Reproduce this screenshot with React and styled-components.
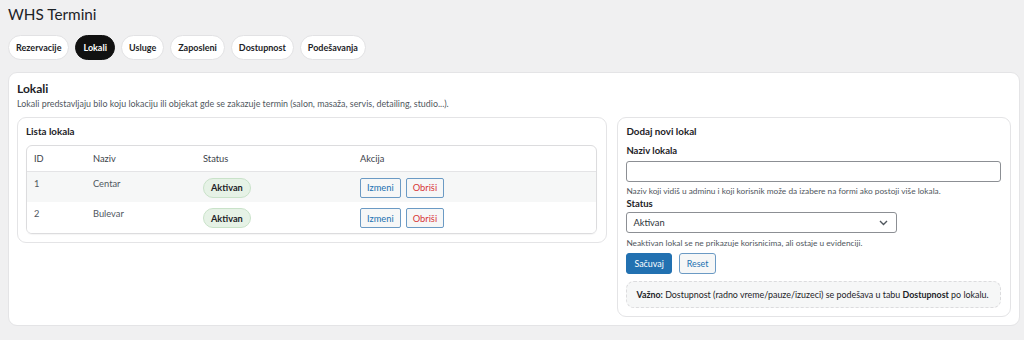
import React from "react";
import styled, { createGlobalStyle } from "styled-components";

const Global = createGlobalStyle`
  html, body { margin: 0; padding: 0; background: #f0f0f1; }
  body { font-family: Lato, "Open Sans", sans-serif; color: #1d2327; }
  * { box-sizing: border-box; }
`;

const Page = styled.div`
  padding: 0 4px 13px 8px;
`;

const Title = styled.h1`
  margin: 0;
  padding-top: 4px;
  height: 30px;
  font-size: 15.3px;
  font-weight: 400;
  line-height: 20px;
  color: #1d2327;
`;

const Tabs = styled.nav`
  display: flex;
  gap: 6px;
  margin-top: 5px;
  margin-bottom: 12px;
`;

const Tab = styled.button`
  height: 25px;
  padding: 0 7px;
  border-radius: 13px;
  border: 1px solid ${(p) => (p.$active ? "#111" : "#e2e2e4")};
  background: ${(p) => (p.$active ? "#111" : "#fff")};
  color: ${(p) => (p.$active ? "#fff" : "#1d2327")};
  font-family: inherit;
  font-size: 9px;
  font-weight: 700;
  cursor: pointer;
`;

const Card = styled.section`
  background: #fff;
  border: 1px solid #e4e4e6;
  border-radius: 9px;
  padding: 8px;
`;

const Heading = styled.h2`
  margin: 0;
  font-size: 12px;
  font-weight: 700;
  line-height: 16px;
`;

const Desc = styled.p`
  margin: 0 0 6px;
  font-size: 8.9px;
  line-height: 14px;
  color: #50575e;
`;

const Grid = styled.div`
  display: grid;
  grid-template-columns: 1.5fr 1fr;
  gap: 10px;
  align-items: start;
`;

const Panel = styled.div`
  border: 1px solid #e4e4e6;
  border-radius: 9px;
  padding: 6px 9px 8px 8px;
`;

const PanelTitle = styled.h3`
  margin: 0 0 ${(p) => p.$mb || "7px"};
  font-size: 9.8px;
  font-weight: 700;
  line-height: 14px;
`;

const TableWrap = styled.div`
  border: 1px solid #dcdcde;
  border-radius: 6px;
  overflow: hidden;
  box-shadow: 0 1px 1px rgba(0,0,0,0.04);
`;

const Table = styled.table`
  width: 100%;
  border-collapse: collapse;
  font-size: 9.3px;
  color: #50575e;
`;

const Th = styled.th`
  text-align: left;
  font-weight: 400;
  height: 25px;
  padding: 0 7px;
  width: ${(p) => p.$w || "auto"};
  color: #3c434a;
  border-bottom: 1px solid #e4e4e6;
`;

const Tr = styled.tr`
  background: ${(p) => (p.$alt ? "#f6f7f7" : "#fff")};
`;

const Td = styled.td`
  height: 31px;
  padding: 6px 7px 0;
  vertical-align: top;
`;

const Badge = styled.span`
  display: inline-flex;
  align-items: center;
  height: 20px;
  padding: 0 7px;
  border-radius: 10px;
  background: #e6f2e6;
  border: 1px solid #c9e2c9;
  color: #1d2327;
  font-weight: 700;
  font-size: 9.2px;
`;

const Actions = styled.div`
  display: flex;
  gap: 5px;
`;

const SmallBtn = styled.button`
  height: 20px;
  padding: 0 6px;
  border-radius: 2px;
  border: 1px solid #6b9ac4;
  background: #f6f7f7;
  color: ${(p) => (p.$danger ? "#d63638" : "#2271b1")};
  font-family: inherit;
  font-size: 9.3px;
  cursor: pointer;
`;

const Label = styled.label`
  display: block;
  font-size: 9.5px;
  font-weight: 700;
  line-height: 13px;
  margin-bottom: ${(p) => p.$mb || "4px"};
`;

const Input = styled.input`
  display: block;
  width: 100%;
  height: 21px;
  border: 1px solid #8c8f94;
  border-radius: 3px;
  background: #fff;
`;

const Hint = styled.p`
  margin: ${(p) => p.$m || "3px 0 0"};
  font-size: 8.3px;
  line-height: 12px;
  color: #50575e;
`;

const SelectBox = styled.div`
  position: relative;
  width: 271px;
  height: 21px;
  border: 1px solid #8c8f94;
  border-radius: 3px;
  display: flex;
  align-items: center;
  padding: 0 8px 0 6px;
  justify-content: space-between;
  font-size: 9.3px;
  color: #2c3338;
`;

const BtnRow = styled.div`
  display: flex;
  gap: 7px;
  margin-top: 4px;
`;

const PrimaryBtn = styled.button`
  height: 21px;
  padding: 0 7px;
  border-radius: 3px;
  border: 1px solid #2271b1;
  background: #2271b1;
  color: #fff;
  font-family: inherit;
  font-size: 8.9px;
`;

const SecondaryBtn = styled(PrimaryBtn)`
  background: #f6f7f7;
  color: #2271b1;
  border-color: #6b9ac4;
`;

const Note = styled.div`
  margin-top: 7px;
  border: 1px dashed #dcdcde;
  border-radius: 8px;
  background: #f6f7f7;
  height: 27px;
  display: flex;
  align-items: center;
  padding: 0 9px;
  font-size: 8.9px;
  color: #1d2327;
  white-space: nowrap;
  b { font-weight: 700; }
`;

const Chevron = () => (
  <svg width="9" height="6" viewBox="0 0 9 6" fill="none">
    <path d="M1 1l3.5 3.5L8 1" stroke="#50575e" strokeWidth="1.4" />
  </svg>
);

const tabs = ["Rezervacije", "Lokali", "Usluge", "Zaposleni", "Dostupnost", "Podešavanja"];
const rows = [
  { id: 1, name: "Centar" },
  { id: 2, name: "Bulevar" },
];

export default function App() {
  return (
    <Page>
      <Global />
      <Title>WHS Termini</Title>
      <Tabs>
        {tabs.map((t) => (
          <Tab key={t} $active={t === "Lokali"}>{t}</Tab>
        ))}
      </Tabs>
      <Card>
        <Heading>Lokali</Heading>
        <Desc>Lokali predstavljaju bilo koju lokaciju ili objekat gde se zakazuje termin (salon, masaža, servis, detailing, studio...).</Desc>
        <Grid>
          <Panel>
            <PanelTitle>Lista lokala</PanelTitle>
            <TableWrap>
              <Table>
                <thead>
                  <tr>
                    <Th $w="59px">ID</Th>
                    <Th $w="110px">Naziv</Th>
                    <Th $w="157px">Status</Th>
                    <Th>Akcija</Th>
                  </tr>
                </thead>
                <tbody>
                  {rows.map((r, i) => (
                    <Tr key={r.id} $alt={i === 0}>
                      <Td>{r.id}</Td>
                      <Td>{r.name}</Td>
                      <Td><Badge>Aktivan</Badge></Td>
                      <Td>
                        <Actions>
                          <SmallBtn>Izmeni</SmallBtn>
                          <SmallBtn $danger>Obriši</SmallBtn>
                        </Actions>
                      </Td>
                    </Tr>
                  ))}
                </tbody>
              </Table>
            </TableWrap>
          </Panel>
          <Panel>
            <PanelTitle $mb="6px">Dodaj novi lokal</PanelTitle>
            <Label>Naziv lokala</Label>
            <Input />
            <Hint>Naziv koji vidiš u adminu i koji korisnik može da izabere na formi ako postoji više lokala.</Hint>
            <Label $mb="2px">Status</Label>
            <SelectBox>
              <span>Aktivan</span>
              <Chevron />
            </SelectBox>
            <Hint $m="4px 0 0">Neaktivan lokal se ne prikazuje korisnicima, ali ostaje u evidenciji.</Hint>
            <BtnRow>
              <PrimaryBtn>Sačuvaj</PrimaryBtn>
              <SecondaryBtn>Reset</SecondaryBtn>
            </BtnRow>
            <Note>
              <span><b>Važno:</b> Dostupnost (radno vreme/pauze/izuzeci) se podešava u tabu <b>Dostupnost</b> po lokalu.</span>
            </Note>
          </Panel>
        </Grid>
      </Card>
    </Page>
  );
}
